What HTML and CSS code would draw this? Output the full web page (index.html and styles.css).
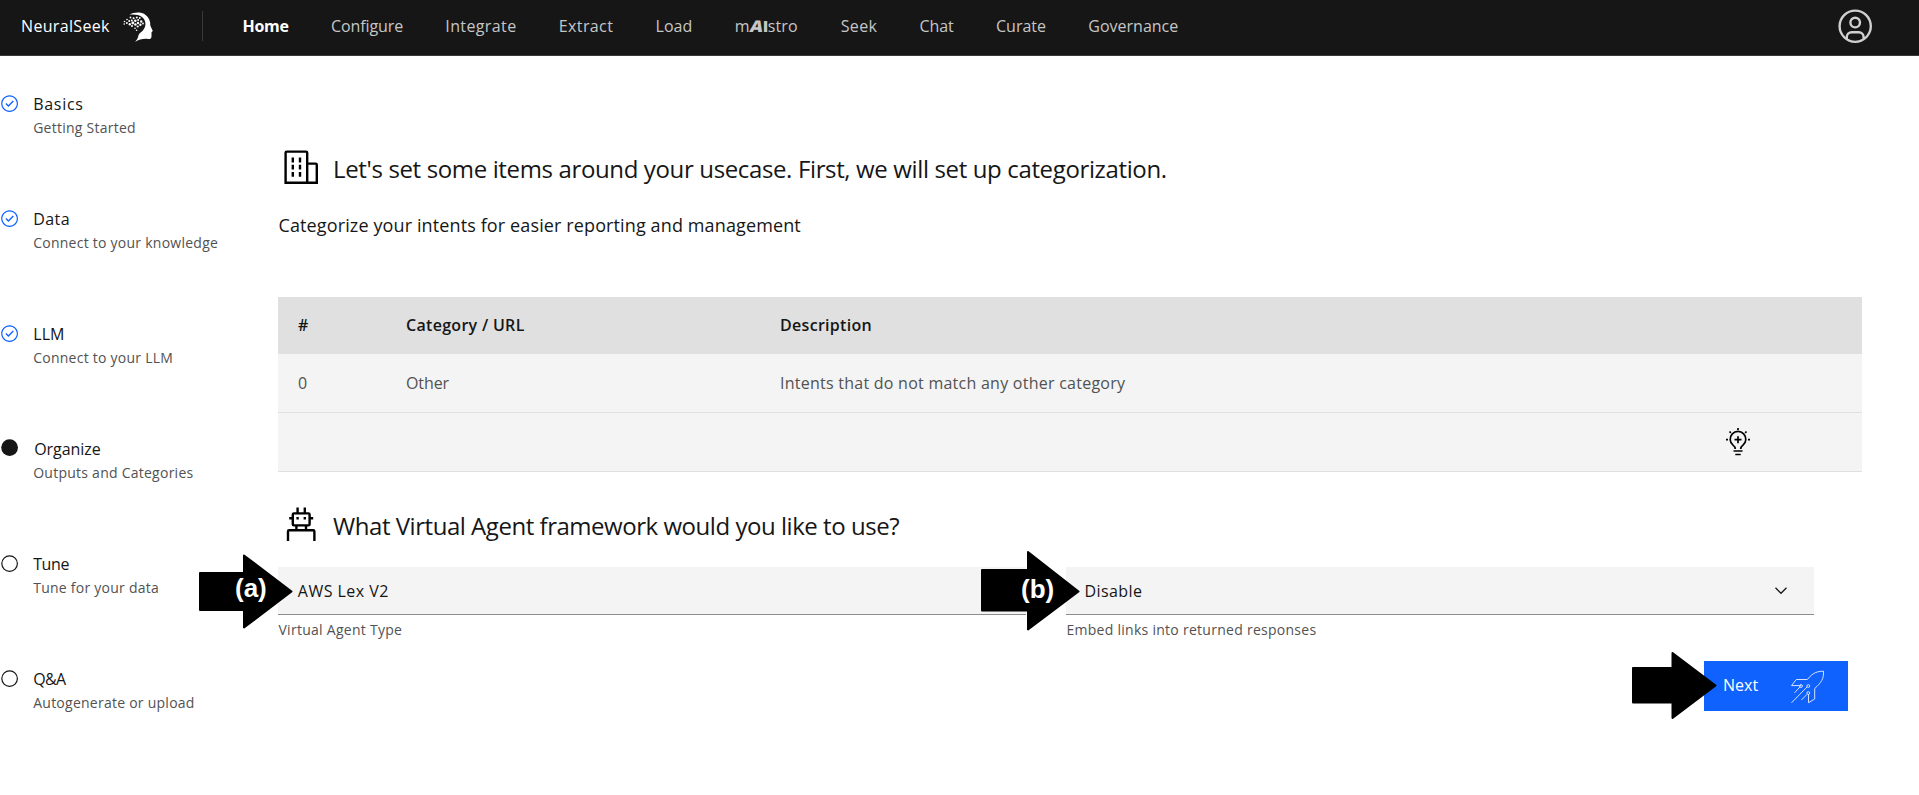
FILE: index.html
```html
<!DOCTYPE html>
<html lang="en">
<head>
<meta charset="utf-8">
<title>NeuralSeek</title>
<link rel="stylesheet" href="styles.css">
</head>
<body>
<svg class="defs" width="0" height="0">
  <symbol id="done" viewBox="0 0 16 16"><path d="M8,1C4.1,1,1,4.1,1,8c0,3.9,3.1,7,7,7s7-3.1,7-7C15,4.1,11.9,1,8,1z M8,14c-3.3,0-6-2.7-6-6s2.7-6,6-6s6,2.7,6,6S11.3,14,8,14z M7,10.8L4.5,8.3l0.8-0.8L7,9.2l3.7-3.7l0.8,0.8L7,10.8z"/></symbol>
  <symbol id="current" viewBox="0 0 16 16"><circle cx="8" cy="8" r="7"/></symbol>
  <symbol id="todo" viewBox="0 0 16 16"><circle cx="8" cy="8" r="6.5" fill="none" stroke="currentColor"/></symbol>
</svg>
<header class="header">
  <div class="brand">
    <span class="brand-name">NeuralSeek</span>
    <svg class="logo" width="32" height="34" viewBox="0 0 32 34">
      <path d="M7.5 3.6 C11 1.2 19 .4 23 3.4 C27 6.3 28.600 10 28.300 14.500 L30.800 20 L29.500 21.300 L29.500 25.500 C29.400 27.800 28 28.200 26 28 C22 27.500 17 28.300 13 31 C17 27 15.500 25 17.500 22.500 C21.500 19.500 24 16 23.300 11.500 C22.400 6.200 18 2.800 7.500 3.600 Z"/>
      <g>
        <circle cx="2.500" cy="10.500" r=".8"/><circle cx="2.200" cy="13" r=".8"/><circle cx="4.800" cy="12" r="1"/><circle cx="5" cy="8.500" r=".8"/>
        <circle cx="7.200" cy="10" r="1"/><circle cx="7.800" cy="13.200" r="1.200"/><circle cx="8.500" cy="6.500" r=".9"/><circle cx="9.800" cy="9.500" r="1"/>
        <circle cx="10.800" cy="12" r="1.400"/><circle cx="11.600" cy="7.200" r="1"/><circle cx="10" cy="15" r="1"/><circle cx="13.300" cy="9.800" r="1.300"/>
        <circle cx="13.400" cy="13.500" r="1.300"/><circle cx="14.800" cy="6.400" r="1"/><circle cx="16.200" cy="9" r="1"/><circle cx="16" cy="12" r="1.200"/>
        <circle cx="17.800" cy="7" r=".9"/><circle cx="19.200" cy="10.500" r="1.200"/><circle cx="18.400" cy="13.800" r="1.200"/><circle cx="21" cy="12.500" r=".9"/>
        <circle cx="15.700" cy="15.500" r="1.100"/><circle cx="13" cy="17.300" r=".8"/><circle cx="14.600" cy="19.300" r=".8"/>
      </g>
    </svg>
  </div>
  <nav class="nav">
    <a class="nav-item active">Home</a>
    <a class="nav-item configure">Configure</a>
    <a class="nav-item wide">Integrate</a>
    <a class="nav-item wide">Extract</a>
    <a class="nav-item load">Load</a>
    <a class="nav-item maistro">m<span class="ai-a">A</span><span class="ai-i">I</span>stro</a>
    <a class="nav-item wide">Seek</a>
    <a class="nav-item tight">Chat</a>
    <a class="nav-item">Curate</a>
    <a class="nav-item">Governance</a>
  </nav>
  <svg class="avatar" viewBox="0 0 32 32"><path d="M16 8a5 5 0 1 0 5 5A5 5 0 0 0 16 8Zm0 8a3 3 0 1 1 3-3A3 3 0 0 1 16 16Z"/><path d="M16 2A14 14 0 1 0 30 16 14 14 0 0 0 16 2ZM10 26.3765V25a3 3 0 0 1 3-3h6a3 3 0 0 1 3 3v1.3765a11.9 11.9 0 0 1-12 0Zm13.9925-1.4507A5 5 0 0 0 19 20H13a5 5 0 0 0-4.9925 4.9258 12 12 0 1 1 15.985 0Z"/></svg>
</header>

<div class="layout">
  <aside class="steps">
    <div class="step done"><svg class="step-icon"><use href="#done"/></svg><div><div class="step-title basics">Basics</div><div class="step-sub">Getting Started</div></div></div>
    <div class="step done"><svg class="step-icon"><use href="#done"/></svg><div><div class="step-title data">Data</div><div class="step-sub">Connect to your knowledge</div></div></div>
    <div class="step done"><svg class="step-icon"><use href="#done"/></svg><div><div class="step-title">LLM</div><div class="step-sub">Connect to your LLM</div></div></div>
    <div class="step"><svg class="step-icon current"><use href="#current"/></svg><div><div class="step-title organize">Organize</div><div class="step-sub">Outputs and Categories</div></div></div>
    <div class="step"><svg class="step-icon"><use href="#todo"/></svg><div><div class="step-title tune">Tune</div><div class="step-sub">Tune for your data</div></div></div>
    <div class="step"><svg class="step-icon"><use href="#todo"/></svg><div><div class="step-title qa">Q&amp;A</div><div class="step-sub">Autogenerate or upload</div></div></div>
  </aside>

  <main class="main">
    <div class="heading">
      <svg class="heading-icon" viewBox="0 0 32 32"><path d="M8 8h2v4H8zM8 14h2v4H8zM8 20h2v4H8zM14 8h2v4h-2zM14 14h2v4h-2zM14 20h2v4h-2z"/><path d="M30 14a2 2 0 0 0-2-2h-6V4a2 2 0 0 0-2-2H4a2 2 0 0 0-2 2v26h28ZM4 4h16v24H4Zm18 24V14h6v14Z"/></svg>
      <h1 class="heading-text">Let's set some items around your usecase. First, we will set up categorization.</h1>
    </div>
    <p class="lead">Categorize your intents for easier reporting and management</p>

    <div class="table">
      <div class="row head"><span>#</span><span>Category / URL</span><span>Description</span></div>
      <div class="row"><span>0</span><span class="other">Other</span><span>Intents that do not match any other category</span></div>
      <div class="row add">
        <svg class="bulb" width="28" height="30" viewBox="0 0 28 30">
          <path d="M11.300 22 C11.300 20.400 10.500 19.400 9 18.200 A7.800 7.800 0 1 1 19 18.200 C17.500 19.400 16.700 20.400 16.700 22"/>
          <path d="M14 9.200v7M10.500 12.700h7M9.500 24h9M11.300 27.500h5.400"/>
          <path d="M14 1v2M2 12.700h2M24 12.700h2M5.500 4.500l1.300 1.300M22.500 4.500l-1.300 1.300"/>
        </svg>
      </div>
    </div>

    <div class="heading second">
      <svg class="heading-icon" viewBox="0 0 32 32"><path d="M18 10h2v2h-2zM12 10h2v2h-2z"/><path d="M26 20h-5v-2h1a2 2 0 0 0 2-2v-4h2v-2h-2V8a2 2 0 0 0-2-2h-2V2h-2v4h-4V2h-2v4h-2a2 2 0 0 0-2 2v2H6v2h2v4a2 2 0 0 0 2 2h1v2H6a2 2 0 0 0-2 2v8h2v-8h20v8h2v-8a2 2 0 0 0-2-2ZM10 8h12v8H10Zm3 10h6v2h-6Z"/></svg>
      <h2 class="heading-text agent">What Virtual Agent framework would you like to use?</h2>
    </div>
    <div class="fields">
      <div class="field">
        <div class="select">AWS Lex V2</div>
        <div class="helper">Virtual Agent Type</div>
      </div>
      <div class="field">
        <div class="select disable">Disable<svg class="chevron" width="14" height="10" viewBox="0 0 14 10"><path d="M1.500 1.800 7 7.300 12.500 1.800"/></svg></div>
        <div class="helper">Embed links into returned responses</div>
      </div>
    </div>
    <button class="next"><span class="next-label">Next</span>
      <svg class="rocket" width="36" height="36" viewBox="0 0 36 36">
        <path d="M11 17.600H1.500L6.300 11.500H17.300C21 7.500 24 3.200 33.500 3.200C34 11 31 14.800 24.700 20.500V31L18.500 34.700V26"/>
        <path d="M10 19 4.500 24.800M17 19 1.500 34.800M17 26.300 11.500 32"/>
        <circle cx="11" cy="18" r="1.400"/><circle cx="18.300" cy="18" r="1.400"/><circle cx="18.300" cy="25" r="1.400"/>
      </svg>
    </button>
  </main>
</div>

<svg class="pointer pointer-a" width="95" height="75" viewBox="0 0 95 75"><path d="M1 19H45V1.500L92.500 37.500 45 73.500V56H1Z"/><text class="pointer-label" x="36" y="43">(a)</text></svg>
<svg class="pointer pointer-b" width="100" height="81" viewBox="0 0 100 81"><path d="M1 20H47V2L97.500 41.500 47 79.500V60.500H1Z"/><text class="pointer-label" x="40" y="48">(b)</text></svg>
<svg class="pointer pointer-next" width="86" height="69" viewBox="0 0 86 69"><path d="M1 17H40.500V2L83.500 34.500 40.500 67V51.500H1Z"/></svg>
</body>
</html>
```
FILE: styles.css
```css
* { box-sizing: border-box; }
body {
  margin: 0;
  width: 1919px;
  height: 795px;
  overflow: hidden;
  background: #fff;
  color: #161616;
  font: 16px/24px "Open Sans", "Noto Sans", sans-serif;
}
svg { display: block; flex: none; }
.defs { display: none; }

.header {
  display: flex;
  align-items: flex-start;
  height: 56px;
  padding-right: 44.6px;
  background: #161616;
  border-bottom: 1px solid #393939;
}
.brand {
  display: flex;
  width: 203px;
  height: 30px;
  margin-top: 11px;
  padding-left: 21px;
  border-right: 1px solid #393939;
  color: #fff;
}
.brand-name { width: 101px; margin-top: 3px; letter-spacing: .33px; }
.logo { fill: #fff; }
.nav { display: flex; gap: 42.3px; margin: 14px auto 0 39.5px; }
.nav-item { color: #c6c6c6; white-space: nowrap; }
.nav-item.active { color: #fff; font-weight: 700; letter-spacing: -.29px; }
.nav-item.configure { letter-spacing: -.1px; }
.nav-item.wide { letter-spacing: .38px; }
.nav-item.load { width: 37px; }
.nav-item.tight { letter-spacing: -.1px; }
.nav-item.maistro { width: 63.500px; letter-spacing: .1px; }
.ai-a { display: inline-block; font-weight: 800; transform: skewX(-12deg) scaleX(1.12); margin: 0 1.500px 0 1px; }
.ai-i { font-weight: 800; margin-left: -.5px; }
.ai-a, .ai-i { letter-spacing: -.6px; }
.avatar { width: 38.400px; height: 38.400px; margin-top: 7px; fill: #d0d0d0; }

.layout { display: flex; }
.steps { width: 278px; padding-top: 36px; }
.step { display: flex; height: 115.100px; }
.step-icon { width: 19.200px; height: 19.200px; margin: 1.900px 14.200px 0 -.2px; fill: #161616; color: #161616; }
.step-icon.current { margin-top: .9px; }
.done .step-icon { fill: #0f62fe; }
.step-title { letter-spacing: .1px; }
.basics { letter-spacing: .7px; }
.data { letter-spacing: .43px; }
.organize { padding-left: 1px; letter-spacing: -.05px; }
.tune { letter-spacing: -.4px; }
.qa { letter-spacing: -.6px; }
.step-sub { margin-top: 2px; font-size: 14px; line-height: 20px; letter-spacing: .25px; color: #525252; }

.main { width: 1584px; padding-top: 92px; }
.heading { display: flex; gap: 13px; height: 39px; padding-left: 3.700px; }
.heading-icon { width: 38.400px; height: 38.400px; fill: #000; }
.heading-text { margin: 5px 0 0; font-size: 24px; line-height: 32px; font-weight: 400; letter-spacing: -.362px; }
.lead { margin: 26px 0 60px; padding-left: .5px; font-size: 18px; line-height: 24px; letter-spacing: .12px; }

.row {
  display: grid;
  grid-template-columns: 108px 374px 1fr;
  align-items: center;
  height: 59px;
  padding: 0 20px;
  background: #f4f4f4;
  border-bottom: 1px solid #e0e0e0;
  color: #525252;
  letter-spacing: .25px;
}
.row.head { height: 57px; padding-bottom: 1px; background: #e0e0e0; color: #161616; font-weight: 600; letter-spacing: .3px; }
.other { letter-spacing: -.1px; }
.row.add { display: flex; justify-content: flex-end; padding: 0 110px 1px 0; }
.bulb { fill: none; stroke: #000; stroke-width: 1.700; }

.second { margin-top: 33px; }
.agent { margin-top: 5px; letter-spacing: -.465px; }
.fields { display: flex; gap: 40px; margin-top: 23px; }
.field { width: 748px; }
.select {
  display: flex;
  align-items: center;
  justify-content: space-between;
  height: 48px;
  padding: 0 26px 0 19.800px;
  background: #f4f4f4;
  border-bottom: 1px solid #8d8d8d;
  letter-spacing: .48px;
}
.select.disable { padding-left: 18.500px; letter-spacing: .4px; }
.chevron { margin-top: 1px; fill: none; stroke: #161616; stroke-width: 1.300; }
.helper { margin-top: 5px; padding-left: .5px; font-size: 14px; line-height: 20px; letter-spacing: .27px; color: #525252; }
.next {
  display: flex;
  align-items: center;
  justify-content: space-between;
  width: 144px;
  height: 50px;
  margin: 21px 14px 0 auto;
  padding: 0 22px 0 19px;
  border: 0;
  background: #0f62fe;
  color: #fff;
  font: inherit;
}
.next-label { margin-bottom: 2px; }
.rocket { fill: none; stroke: #d5e3ff; stroke-width: 1; }

.pointer { position: absolute; fill: #000; stroke: #000; stroke-width: 2; stroke-linejoin: round; }
.pointer-a { left: 199px; top: 554px; }
.pointer-b { left: 981px; top: 550px; }
.pointer-next { left: 1632px; top: 651px; }
.pointer-label { font: bold 26px "Liberation Sans", sans-serif; fill: #fff; stroke: none; }
```
